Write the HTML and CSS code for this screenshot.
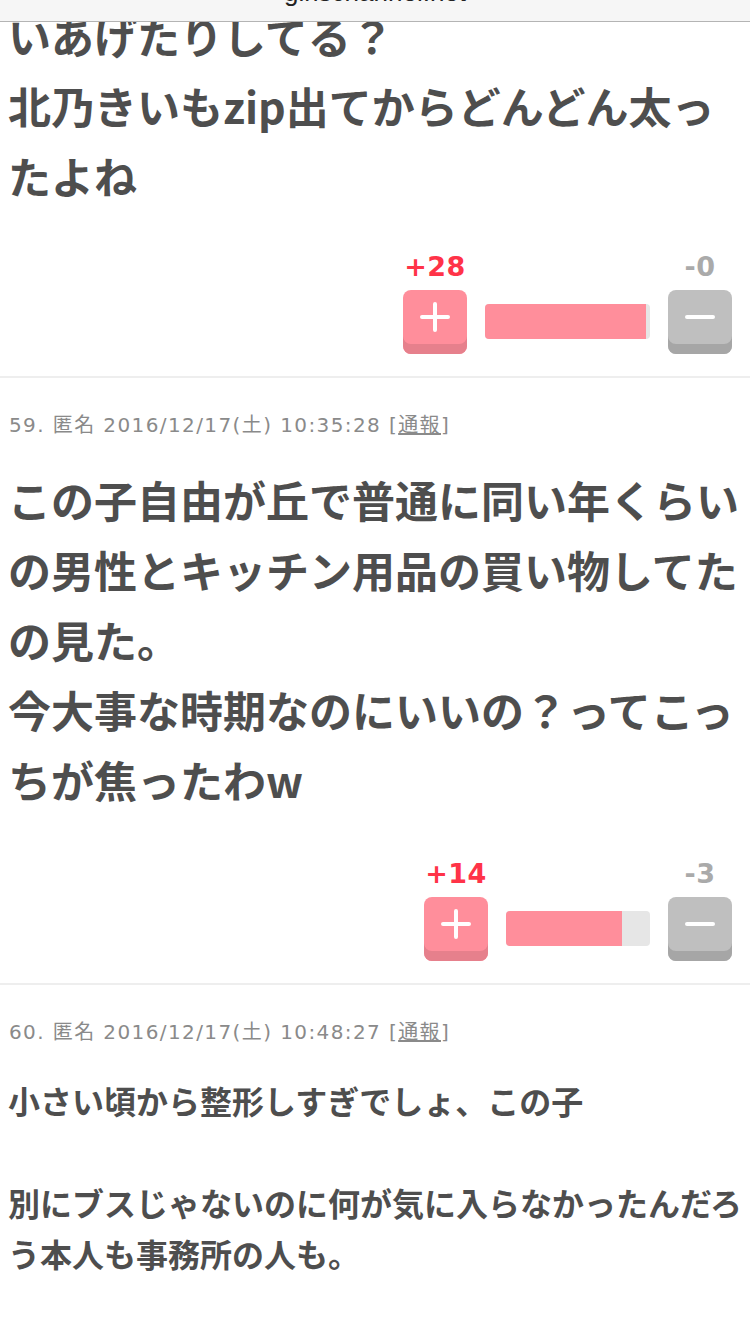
FILE: index.html
```html
<!DOCTYPE html>
<html lang="ja">

<head>
    <meta charset="UTF-8">
    <meta name="viewport" content="width=device-width, initial-scale=1.0">
    <title>girlschannel.net</title>
    <link rel="stylesheet" href="styles.css">
</head>

<body>
    <header class="url_bar"><span>girlschannel.net</span></header>

    <div class="thread">
        <div class="comment comment_cut">
            <div class="comment_body big">いあげたりしてる？<br>北乃きいもzip出てからどんどん太ったよね</div>
            <div class="vote">
                <div class="vote_col">
                    <span class="vote_count plus">+28</span>
                    <button class="vote_btn plus">
                        <svg width="30" height="30" viewBox="0 0 30 30"><path d="M15 2v26M2 15h26" /></svg>
                    </button>
                </div>
                <div class="vote_bar" style="width:165px"><span class="vote_fill" style="width:97.6%"></span></div>
                <div class="vote_col">
                    <span class="vote_count minus">-0</span>
                    <button class="vote_btn minus">
                        <svg width="30" height="30" viewBox="0 0 30 30"><path d="M2 15h26" /></svg>
                    </button>
                </div>
            </div>
        </div>

        <div class="comment">
            <div class="comment_meta">59. 匿名 2016/12/17(土) 10:35:28 [<a href="#">通報</a>]</div>
            <div class="comment_body big">この子自由が丘で普通に同い年くらいの男性とキッチン用品の買い物してたの見た。<br>今大事な時期なのにいいの？ってこっちが焦ったわw</div>
            <div class="vote">
                <div class="vote_col">
                    <span class="vote_count plus">+14</span>
                    <button class="vote_btn plus">
                        <svg width="30" height="30" viewBox="0 0 30 30"><path d="M15 2v26M2 15h26" /></svg>
                    </button>
                </div>
                <div class="vote_bar" style="width:144px"><span class="vote_fill" style="width:80.5%"></span></div>
                <div class="vote_col">
                    <span class="vote_count minus">-3</span>
                    <button class="vote_btn minus">
                        <svg width="30" height="30" viewBox="0 0 30 30"><path d="M2 15h26" /></svg>
                    </button>
                </div>
            </div>
        </div>

        <div class="comment comment_last">
            <div class="comment_meta">60. 匿名 2016/12/17(土) 10:48:27 [<a href="#">通報</a>]</div>
            <div class="comment_body">小さい頃から整形しすぎでしょ、この子<br><br>別にブスじゃないのに何が気に入らなかったんだろう本人も事務所の人も。</div>
        </div>
    </div>
</body>

</html>
```

FILE: styles.css
```css
* {
    margin: 0px;
    padding: 0px;
    box-sizing: border-box;
}

body {
    background-color: #fff;
    font-family: "Noto Sans CJK JP", sans-serif;
    color: #4e4e4e;
}

/* browser address bar lying over the page */
.url_bar {
    position: fixed;
    top: 0;
    left: 0;
    width: 100%;
    height: 22px;
    overflow: hidden;
    background-color: #f6f6f6;
    border-bottom: 1px solid #b4b4b4;
    text-align: center;
    z-index: 10;
}

.url_bar span {
    display: block;
    margin-top: -23px;
    font-family: "Liberation Sans", sans-serif;
    font-size: 26px;
    line-height: 30px;
    color: #222;
}

.comment {
    padding-bottom: 22px;
    border-bottom: 2px solid #eeeeee;
}

.comment_last {
    border-bottom: none;
}

.comment_meta {
    padding: 33px 0 0 9px;
    font-family: "DejaVu Sans", "Noto Sans CJK JP", sans-serif;
    font-size: 20px;
    line-height: 28px;
    letter-spacing: 1.4px;
    color: #8a8a8a;
    white-space: nowrap;
}

.comment_meta a {
    color: #8a8a8a;
    text-decoration: underline;
}

.comment_body {
    margin-top: 29px;
    padding-left: 8px;
    font-size: 32px;
    line-height: 51px;
    font-weight: 700;
}

.comment_body.big {
    margin-top: 25px;
    font-size: 43px;
    line-height: 70px;
}

.comment_cut .comment_body {
    margin-top: 0;
}

.vote {
    display: flex;
    justify-content: flex-end;
    align-items: flex-end;
    gap: 18px;
    margin-top: 44px;
    padding-right: 18px;
}

.comment_cut .vote {
    margin-top: 41px;
}

.vote_col {
    display: flex;
    flex-direction: column;
    align-items: center;
    gap: 7px;
}

.vote_count {
    font-family: "DejaVu Sans", sans-serif;
    font-weight: 700;
    font-size: 27px;
    line-height: 32px;
    letter-spacing: 0.5px;
}

.vote_count.plus {
    color: #ff3348;
}

.vote_count.minus {
    color: #aaaaaa;
}

.vote_btn {
    display: flex;
    justify-content: center;
    align-items: center;
    width: 64px;
    height: 64px;
    padding-bottom: 10px;
    border: none;
    border-radius: 8px;
    cursor: pointer;
}

.vote_btn path {
    stroke: #fff;
    stroke-width: 4;
    stroke-linecap: round;
    fill: none;
}

.vote_btn.plus {
    background-color: #ff8e9b;
    box-shadow: inset 0 -10px 0 #e6808c;
}

.vote_btn.minus {
    background-color: #bfbfbf;
    box-shadow: inset 0 -10px 0 #a6a6a6;
}

.vote_bar {
    height: 35px;
    margin-bottom: 15px;
    background-color: #e6e6e6;
    border-radius: 4px;
    overflow: hidden;
}

.vote_fill {
    display: block;
    height: 100%;
    background-color: #ff8e9b;
}
```
